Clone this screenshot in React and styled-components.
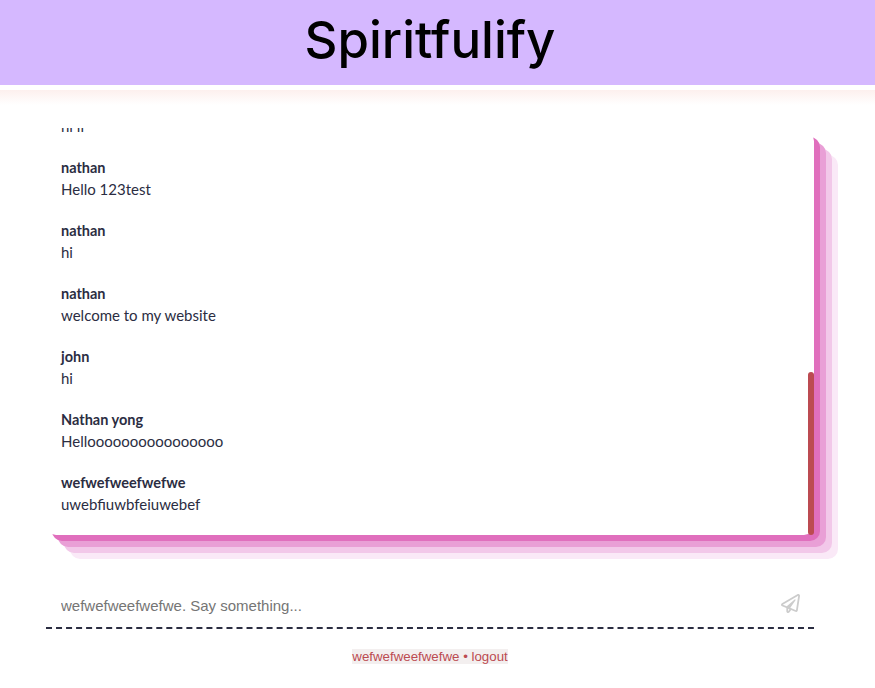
import React, { useEffect, useRef } from "react"
import styled, { createGlobalStyle } from "styled-components"
import { FaRegPaperPlane } from "react-icons/fa"

const GlobalStyle = createGlobalStyle`
  html, body {
    margin: 0;
    padding: 0;
    background: #fff;
    overflow: hidden;
  }
`

const Page = styled.div`
  width: 875px;
  height: 688px;
  font-family: "Liberation Sans", Arial, sans-serif;
`

const Header = styled.header`
  height: 85px;
  padding: 0 15px 6px 0;
  box-sizing: border-box;
  background: #d5b8ff;
  display: flex;
  justify-content: center;
  align-items: center;
`

const Title = styled.h1`
  margin: 0;
  font-family: Inter, sans-serif;
  font-size: 51px;
  font-weight: 500;
  color: #000;
`

const Fade = styled.div`
  height: 15px;
  margin-top: 5px;
  background: linear-gradient(#fdf0ee, #fff);
`

const Main = styled.main`
  width: 768px;
  margin: 23px 0 0 46px;
`

const Card = styled.section`
  position: relative;
  height: 407px;
  z-index: 0;

  &::before {
    content: "";
    position: absolute;
    top: 3px;
    left: 0;
    right: 0;
    bottom: 0;
    z-index: -1;
    background: #fff;
    border-radius: 10px;
    box-shadow:
      6px 6px 0 #e06fbd,
      12px 12px 0 #e99fd6,
      18px 18px 0 #f2c8e9,
      24px 24px 0 #fae9f7;
  }
`

const Scroller = styled.div`
  height: 100%;
  overflow: hidden;
  padding: 0 15px 20px;
  box-sizing: border-box;
`

const ScrollThumb = styled.div`
  position: absolute;
  right: 0;
  bottom: 0;
  width: 6px;
  height: 163px;
  background: #bc4b51;
  border-radius: 4px;
`

const Message = styled.div`
  margin-top: 21px;
  font-family: Lato, sans-serif;
  font-size: 15px;
  line-height: 21px;
  color: #2b2d42;
`

const Sender = styled.div`
  font-size: 14.5px;
  font-weight: 700;
  position: relative;
  top: -1px;
`

const Form = styled.form`
  display: flex;
  align-items: center;
  height: 46px;
  margin-top: 46px;
  padding: 3px 15px 0;
  box-sizing: content-box;
  height: 43px;
  border-bottom: 2px dashed #2b2d42;
`

const Input = styled.input`
  flex: 1;
  border: 0;
  outline: 0;
  padding: 0;
  background: transparent;
  font-family: "Liberation Sans", Arial, sans-serif;
  font-size: 15px;
  color: #2b2d42;
`

const SendButton = styled.button`
  display: flex;
  border: 0;
  padding: 0;
  margin: -4px -1px 0 0;
  background: none;
  color: #ccc;
  font-size: 19px;
`

const Footer = styled.footer`
  margin-top: 20px;
  padding-right: 15px;
  text-align: center;
  font-size: 13.3px;
  line-height: 15px;
`

const LogoutLink = styled.span`
  background: #f3efef;
  color: #bc4b51;
`

const messages = [
  ["nathan", "hello"],
  ["john", "how are you"],
  ["nathan", "good thanks"],
  ["john", "nice"],
  ["nathan", "test"],
  ["john", "hey"],
  ["nathan", "testing"],
  ["john", "ok"],
  ["nathan", "hi"],
  ["john", "hi ii"],
  ["nathan", "Hello 123test"],
  ["nathan", "hi"],
  ["nathan", "welcome to my website"],
  ["john", "hi"],
  ["Nathan yong", "Helloooooooooooooooo"],
  ["wefwefweefwefwe", "uwebfiuwbfeiuwebef"],
]

export default function App() {
  const listRef = useRef(null)

  useEffect(() => {
    listRef.current.scrollTop = listRef.current.scrollHeight
  }, [])

  return (
    <Page>
      <GlobalStyle />
      <Header>
        <Title>Spiritfulify</Title>
      </Header>
      <Fade />
      <Main>
        <Card>
          <Scroller ref={listRef}>
            {messages.map(([name, text], i) => (
              <Message key={i}>
                <Sender>{name}</Sender>
                {text}
              </Message>
            ))}
          </Scroller>
          <ScrollThumb />
        </Card>
        <Form onSubmit={(e) => e.preventDefault()}>
          <Input placeholder="wefwefweefwefwe. Say something..." />
          <SendButton type="submit" aria-label="Send">
            <FaRegPaperPlane />
          </SendButton>
        </Form>
      </Main>
      <Footer>
        <LogoutLink>wefwefweefwefwe • logout</LogoutLink>
      </Footer>
    </Page>
  )
}
